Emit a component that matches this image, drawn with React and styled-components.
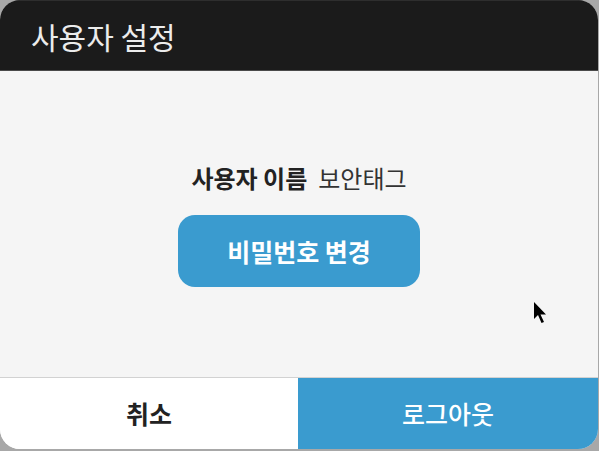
import React from "react";
import styled, { createGlobalStyle } from "styled-components";

const Global = createGlobalStyle`
  html, body { margin: 0; padding: 0; }
  body {
    background: #a8a8a8;
    width: 599px;
    height: 451px;
    overflow: hidden;
    font-family: "Noto Sans CJK KR", "Noto Sans", sans-serif;
  }
`;

const Dialog = styled.div`
  position: relative;
  width: 598px;
  height: 449px;
  border-radius: 20px;
  overflow: hidden;
  display: flex;
  flex-direction: column;
  background: #f5f5f5;
`;

const Header = styled.header`
  flex: none;
  height: 69px;
  background: #1b1b1b;
  border-top: 1px solid #2e2e2e;
  border-bottom: 1px solid #4a4a4a;
  display: flex;
  align-items: center;
  padding-left: 31px;
`;

const Title = styled.h1`
  margin: 0;
  font-size: 30px;
  font-weight: 400;
  color: #ececec;
  line-height: 1;
`;

const Body = styled.main`
  flex: 1;
  display: flex;
  flex-direction: column;
  align-items: center;
  justify-content: center;
  gap: 21px;
  background: #f5f5f5;
`;

const NameRow = styled.div`
  display: flex;
  align-items: center;
  gap: 11px;
  font-size: 24px;
  line-height: 32px;
  color: #222;
`;

const Label = styled.span`
  font-weight: ${(p) => (p.$bold ? 700 : 400)};
  color: ${(p) => (p.$bold ? "#222" : "#333")};
`;

const PrimaryButton = styled.button`
  width: 242px;
  height: 72px;
  border: none;
  border-radius: 17px;
  background: #3a9bcf;
  color: #fff;
  font-family: inherit;
  font-size: 25px;
  font-weight: 700;
  cursor: pointer;
`;

const Footer = styled.footer`
  height: 71px;
  flex: none;
  display: grid;
  grid-template-columns: 298px 1fr;
  border-top: 1px solid #d2d2d2;
`;

const FooterButton = styled.button`
  border: none;
  margin: 0;
  font-family: inherit;
  font-size: 25px;
  font-weight: ${(p) => (p.$primary ? 500 : 700)};
  background: ${(p) => (p.$primary ? "#3a9bcf" : "#ffffff")};
  color: ${(p) => (p.$primary ? "#ffffff" : "#222222")};
  cursor: pointer;
  padding: 0 0 2px;
`;

const Cursor = styled.svg`
  position: absolute;
  left: 533px;
  top: 302px;
  width: 15px;
  height: 23px;
  pointer-events: none;
`;

export default function App() {
  return (
    <>
      <Global />
      <Dialog>
        <Header>
          <Title>사용자 설정</Title>
        </Header>
        <Body>
          <NameRow>
            <Label $bold>사용자 이름</Label>
            <Label>보안태그</Label>
          </NameRow>
          <PrimaryButton>비밀번호 변경</PrimaryButton>
        </Body>
        <Footer>
          <FooterButton>취소</FooterButton>
          <FooterButton $primary>로그아웃</FooterButton>
        </Footer>
        <Cursor viewBox="0 0 15 23">
          <path d="M1 0 L1 17 L5 13 L8.5 21 L11 20 L7.5 12.5 L13 12.5 Z" fill="#000" />
        </Cursor>
      </Dialog>
    </>
  );
}
